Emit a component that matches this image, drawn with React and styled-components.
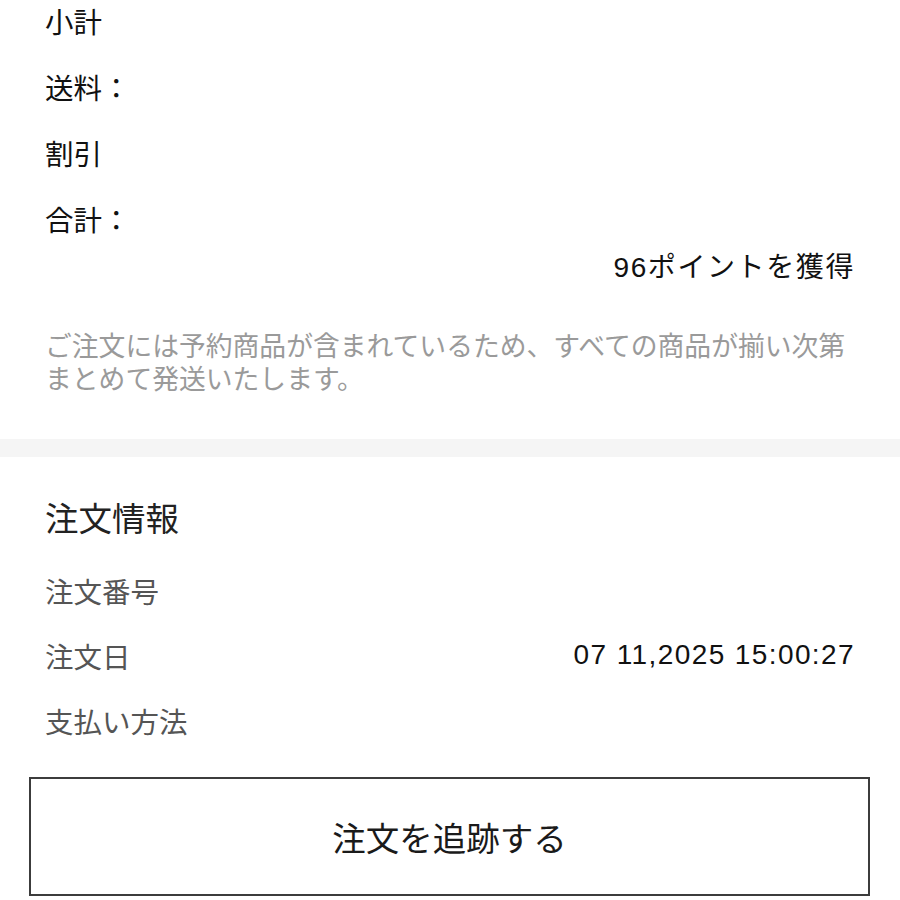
import styled, { createGlobalStyle } from "styled-components";

const GlobalStyle = createGlobalStyle`
  html, body {
    margin: 0;
    padding: 0;
    background: #ffffff;
  }
  body {
    font-family: "Liberation Sans", "Noto Sans CJK JP", sans-serif;
    color: #111111;
  }
`;

const Page = styled.div`
  width: 900px;
  height: 900px;
  overflow: hidden;
  background: #ffffff;
`;

const Section = styled.section`
  padding: 0 45px;
  display: flex;
  flex-direction: column;
`;

const SummaryList = styled.div`
  display: flex;
  flex-direction: column;
  gap: 26px;
`;

const Row = styled.div`
  display: flex;
  justify-content: space-between;
  align-items: center;
  height: 40px;
`;

const Label = styled.span`
  font-size: 28.5px;
  color: ${(p) => (p.$muted ? "#555555" : "#111111")};
`;

const Value = styled.span`
  font-size: 28px;
  color: #111111;
  letter-spacing: ${(p) => p.$spacing || 0}px;
`;

const Points = styled.div`
  margin-top: 10px;
  height: 40px;
  line-height: 40px;
  text-align: right;
  font-size: 28px;
  letter-spacing: 1.6px;
  color: #111111;
`;

const Note = styled.p`
  margin: 43px -30px 0 0;
  font-size: 26.8px;
  line-height: 33px;
  color: #9a9a9a;
`;

const Divider = styled.div`
  height: 18px;
  background: #f5f5f5;
  margin-top: 42px;
`;

const Heading = styled.h2`
  margin: 43px 0 0;
  height: 40px;
  line-height: 40px;
  font-size: 33.5px;
  font-weight: 400;
  color: #222222;
`;

const InfoList = styled.div`
  display: flex;
  flex-direction: column;
  gap: 25px;
  margin-top: 30px;
`;

const ButtonWrap = styled.div`
  padding: 37px 30px 0 29px;
`;

const TrackButton = styled.button`
  width: 100%;
  height: 119px;
  background: #ffffff;
  border: 2px solid #3c3c3c;
  border-radius: 0;
  font-family: "Liberation Sans", "Noto Sans CJK JP", sans-serif;
  font-size: 33.5px;
  color: #1a1a1a;
  cursor: pointer;
`;

export default function App() {
  return (
    <Page>
      <GlobalStyle />
      <Section>
        <SummaryList>
          <Row>
            <Label>小計</Label>
          </Row>
          <Row>
            <Label>送料：</Label>
          </Row>
          <Row>
            <Label>割引</Label>
          </Row>
          <Row>
            <Label>合計：</Label>
          </Row>
        </SummaryList>
        <Points>96ポイントを獲得</Points>
        <Note>
          ご注文には予約商品が含まれているため、すべての商品が揃い次第
          <br />
          まとめて発送いたします。
        </Note>
      </Section>
      <Divider />
      <Section>
        <Heading>注文情報</Heading>
        <InfoList>
          <Row>
            <Label $muted>注文番号</Label>
          </Row>
          <Row>
            <Label $muted>注文日</Label>
            <Value $spacing={1.4}>07 11,2025 15:00:27</Value>
          </Row>
          <Row>
            <Label $muted>支払い方法</Label>
          </Row>
        </InfoList>
      </Section>
      <ButtonWrap>
        <TrackButton>注文を追跡する</TrackButton>
      </ButtonWrap>
    </Page>
  );
}
